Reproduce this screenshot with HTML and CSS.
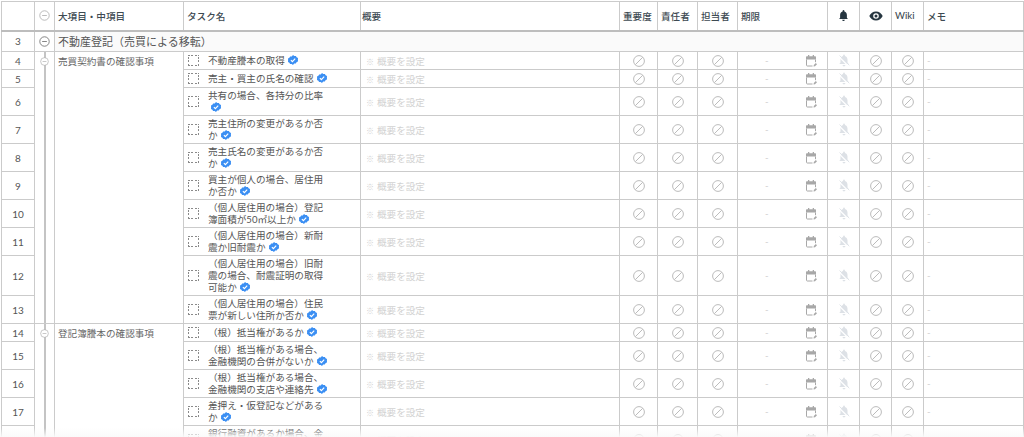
FILE: index.html
```html
<!DOCTYPE html>
<html lang="ja">
<head>
<meta charset="utf-8">
<title>タスク一覧</title>
<link rel="stylesheet" href="styles.css">
</head>
<body>
<svg class="sprite" aria-hidden="true">
  <symbol id="ban" viewBox="0 0 12 12"><circle cx="6" cy="6" r="5.4" fill="none" stroke="currentColor"/><path d="M2.3 9.7 9.700 2.300" stroke="currentColor" fill="none"/></symbol>
  <symbol id="cal" viewBox="0 0 12 12"><path d="M3 0h1.300v1.200h3.400V0H9v1.200h1c.6 0 1 .4 1 1v2.400H1V2.200c0-.6.400-1 1-1h1z" fill="currentColor"/><path d="M1.500 4.500v5.700c0 .4.300.8.800.8h5.200M10.500 4.500v2.700" fill="none" stroke="currentColor"/><path d="M8.500 11.600 8.800 10l2-2 1.200 1.200-2 2z" fill="currentColor"/></symbol>
  <symbol id="belloff" viewBox="0 0 12 13"><path d="M6 .5c.5 0 .9.400.9.900v.5c1.700.4 2.600 1.900 2.600 3.600v3l1.200 1.500H1.300l1.200-1.500v-3c0-1.700.9-3.200 2.600-3.600v-.5c0-.5.400-.9.900-.9zM4.600 11.100h2.800c0 .8-.6 1.400-1.400 1.400s-1.400-.6-1.400-1.400z" fill="currentColor"/><path d="M.9 2.600l9.400 9.400" stroke="#fff" stroke-width="1.300"/><path d="M1.500 1.500l9.800 9.800" stroke="currentColor" stroke-width=".9"/></symbol>
  <symbol id="bell" viewBox="0 0 12 12"><path d="M6 0c.6 0 1 .4 1 1v.6c1.700.5 2.700 2 2.700 3.800v3l1.100 1.300H1.200l1.100-1.300v-3c0-1.800 1-3.300 2.700-3.800V1c0-.6.400-1 1-1zM4.600 10.600h2.800C7.400 11.400 6.800 12 6 12s-1.400-.6-1.400-1.400z" fill="currentColor"/></symbol>
  <symbol id="eye" viewBox="0 0 14 10"><path d="M7 .5C4 .5 1.500 2.300.3 5 1.500 7.700 4 9.500 7 9.500s5.500-1.800 6.700-4.500C12.500 2.300 10 .5 7 .5zm0 7.300A2.800 2.800 0 1 1 7 2.200a2.800 2.800 0 0 1 0 5.600zM7 3.500a1.500 1.500 0 1 0 0 3 1.500 1.500 0 0 0 0-3z" fill="currentColor"/></symbol>
  <symbol id="check" viewBox="0 0 10 10"><path d="M5 .1l1.300.9 1.600-.1.700 1.400 1.400.8-.1 1.600.1.300-.1 1.400-1.400.8-.7 1.400-1.600-.1L5 9.900l-1.300-.9-1.600.1-.7-1.400L0 6.900l.1-1.600L0 3.600l1.400-.8.7-1.400 1.600.1z" fill="#3b8ff3"/><path d="M2.900 5.100l1.500 1.500 2.800-2.900" fill="none" stroke="#fff" stroke-width="1.200"/></symbol>
  <symbol id="minus" viewBox="0 0 14 14"><circle cx="7" cy="7" r="6" fill="#fff" stroke="currentColor" stroke-width="1"/><path d="M4 7h6" stroke="currentColor" stroke-width="1"/></symbol>
</svg>
<main class="sheet">
<table class="grid">
<colgroup>
  <col class="c-num"><col class="c-tog"><col class="c-major"><col class="c-task"><col class="c-sum">
  <col class="c-a"><col class="c-b"><col class="c-b"><col class="c-date"><col class="c-i"><col class="c-i"><col class="c-i"><col class="c-memo">
</colgroup>
<thead>
<tr class="head">
  <th></th><th class="tog-cell"><svg class="ic-head-minus"><use href="#minus"/></svg></th>
  <th>大項目・中項目</th><th>タスク名</th><th class="th-sum">概要</th><th>重要度</th><th>責任者</th><th>担当者</th><th>期限</th>
  <th class="mid"><svg class="ic-bell"><use href="#bell"/></svg></th>
  <th class="mid"><svg class="ic-eye"><use href="#eye"/></svg></th>
  <th>Wiki</th><th>メモ</th>
</tr>
</thead>
<tbody>
<tr class="group">
  <td class="num">3</td><td class="tog-cell"><svg class="ic-group-minus"><use href="#minus"/></svg></td>
  <td colspan="11" class="group-title">不動産登記（売買による移転）</td>
</tr>

<tr class="h18"><td class="num">4</td><td class="tree" rowspan="10"><svg class="ic-node"><use href="#minus"/></svg></td><td class="major" rowspan="10">売買契約書の確認事項</td>
  <td><div class="task"><span class="box"></span><p>不動産謄本の取得<svg class="ic-check"><use href="#check"/></svg></p></div></td>
  <td class="sum"><span class="mark">※</span>概要を設定</td>
  <td class="ico"><svg class="ic-ban"><use href="#ban"/></svg></td><td class="ico"><svg class="ic-ban"><use href="#ban"/></svg></td><td class="ico"><svg class="ic-ban"><use href="#ban"/></svg></td>
  <td><div class="date"><span>-</span><svg class="ic-cal"><use href="#cal"/></svg></div></td>
  <td class="ico"><svg class="ic-off"><use href="#belloff"/></svg></td><td class="ico"><svg class="ic-ban"><use href="#ban"/></svg></td><td class="ico"><svg class="ic-ban"><use href="#ban"/></svg></td><td class="memo">-</td></tr>
<tr class="h18"><td class="num">5</td>
  <td><div class="task"><span class="box"></span><p>売主・買主の氏名の確認<svg class="ic-check"><use href="#check"/></svg></p></div></td>
  <td class="sum"><span class="mark">※</span>概要を設定</td>
  <td class="ico"><svg class="ic-ban"><use href="#ban"/></svg></td><td class="ico"><svg class="ic-ban"><use href="#ban"/></svg></td><td class="ico"><svg class="ic-ban"><use href="#ban"/></svg></td>
  <td><div class="date"><span>-</span><svg class="ic-cal"><use href="#cal"/></svg></div></td>
  <td class="ico"><svg class="ic-off"><use href="#belloff"/></svg></td><td class="ico"><svg class="ic-ban"><use href="#ban"/></svg></td><td class="ico"><svg class="ic-ban"><use href="#ban"/></svg></td><td class="memo">-</td></tr>
<tr class="h28"><td class="num">6</td>
  <td><div class="task"><span class="box"></span><p>共有の場合、各持分の比率<svg class="ic-check"><use href="#check"/></svg></p></div></td>
  <td class="sum"><span class="mark">※</span>概要を設定</td>
  <td class="ico"><svg class="ic-ban"><use href="#ban"/></svg></td><td class="ico"><svg class="ic-ban"><use href="#ban"/></svg></td><td class="ico"><svg class="ic-ban"><use href="#ban"/></svg></td>
  <td><div class="date"><span>-</span><svg class="ic-cal"><use href="#cal"/></svg></div></td>
  <td class="ico"><svg class="ic-off"><use href="#belloff"/></svg></td><td class="ico"><svg class="ic-ban"><use href="#ban"/></svg></td><td class="ico"><svg class="ic-ban"><use href="#ban"/></svg></td><td class="memo">-</td></tr>
<tr class="h28"><td class="num">7</td>
  <td><div class="task"><span class="box"></span><p>売主住所の変更があるか否か<svg class="ic-check"><use href="#check"/></svg></p></div></td>
  <td class="sum"><span class="mark">※</span>概要を設定</td>
  <td class="ico"><svg class="ic-ban"><use href="#ban"/></svg></td><td class="ico"><svg class="ic-ban"><use href="#ban"/></svg></td><td class="ico"><svg class="ic-ban"><use href="#ban"/></svg></td>
  <td><div class="date"><span>-</span><svg class="ic-cal"><use href="#cal"/></svg></div></td>
  <td class="ico"><svg class="ic-off"><use href="#belloff"/></svg></td><td class="ico"><svg class="ic-ban"><use href="#ban"/></svg></td><td class="ico"><svg class="ic-ban"><use href="#ban"/></svg></td><td class="memo">-</td></tr>
<tr class="h28"><td class="num">8</td>
  <td><div class="task"><span class="box"></span><p>売主氏名の変更があるか否か<svg class="ic-check"><use href="#check"/></svg></p></div></td>
  <td class="sum"><span class="mark">※</span>概要を設定</td>
  <td class="ico"><svg class="ic-ban"><use href="#ban"/></svg></td><td class="ico"><svg class="ic-ban"><use href="#ban"/></svg></td><td class="ico"><svg class="ic-ban"><use href="#ban"/></svg></td>
  <td><div class="date"><span>-</span><svg class="ic-cal"><use href="#cal"/></svg></div></td>
  <td class="ico"><svg class="ic-off"><use href="#belloff"/></svg></td><td class="ico"><svg class="ic-ban"><use href="#ban"/></svg></td><td class="ico"><svg class="ic-ban"><use href="#ban"/></svg></td><td class="memo">-</td></tr>
<tr class="h28"><td class="num">9</td>
  <td><div class="task"><span class="box"></span><p>買主が個人の場合、居住用か否か<svg class="ic-check"><use href="#check"/></svg></p></div></td>
  <td class="sum"><span class="mark">※</span>概要を設定</td>
  <td class="ico"><svg class="ic-ban"><use href="#ban"/></svg></td><td class="ico"><svg class="ic-ban"><use href="#ban"/></svg></td><td class="ico"><svg class="ic-ban"><use href="#ban"/></svg></td>
  <td><div class="date"><span>-</span><svg class="ic-cal"><use href="#cal"/></svg></div></td>
  <td class="ico"><svg class="ic-off"><use href="#belloff"/></svg></td><td class="ico"><svg class="ic-ban"><use href="#ban"/></svg></td><td class="ico"><svg class="ic-ban"><use href="#ban"/></svg></td><td class="memo">-</td></tr>
<tr class="h28"><td class="num">10</td>
  <td><div class="task"><span class="box"></span><p>（個人居住用の場合）登記簿面積が50㎡以上か<svg class="ic-check"><use href="#check"/></svg></p></div></td>
  <td class="sum"><span class="mark">※</span>概要を設定</td>
  <td class="ico"><svg class="ic-ban"><use href="#ban"/></svg></td><td class="ico"><svg class="ic-ban"><use href="#ban"/></svg></td><td class="ico"><svg class="ic-ban"><use href="#ban"/></svg></td>
  <td><div class="date"><span>-</span><svg class="ic-cal"><use href="#cal"/></svg></div></td>
  <td class="ico"><svg class="ic-off"><use href="#belloff"/></svg></td><td class="ico"><svg class="ic-ban"><use href="#ban"/></svg></td><td class="ico"><svg class="ic-ban"><use href="#ban"/></svg></td><td class="memo">-</td></tr>
<tr class="h28"><td class="num">11</td>
  <td><div class="task"><span class="box"></span><p>（個人居住用の場合）新耐震か旧耐震か<svg class="ic-check"><use href="#check"/></svg></p></div></td>
  <td class="sum"><span class="mark">※</span>概要を設定</td>
  <td class="ico"><svg class="ic-ban"><use href="#ban"/></svg></td><td class="ico"><svg class="ic-ban"><use href="#ban"/></svg></td><td class="ico"><svg class="ic-ban"><use href="#ban"/></svg></td>
  <td><div class="date"><span>-</span><svg class="ic-cal"><use href="#cal"/></svg></div></td>
  <td class="ico"><svg class="ic-off"><use href="#belloff"/></svg></td><td class="ico"><svg class="ic-ban"><use href="#ban"/></svg></td><td class="ico"><svg class="ic-ban"><use href="#ban"/></svg></td><td class="memo">-</td></tr>
<tr class="h40"><td class="num">12</td>
  <td><div class="task"><span class="box"></span><p>（個人居住用の場合）旧耐震の場合、耐震証明の取得可能か<svg class="ic-check"><use href="#check"/></svg></p></div></td>
  <td class="sum"><span class="mark">※</span>概要を設定</td>
  <td class="ico"><svg class="ic-ban"><use href="#ban"/></svg></td><td class="ico"><svg class="ic-ban"><use href="#ban"/></svg></td><td class="ico"><svg class="ic-ban"><use href="#ban"/></svg></td>
  <td><div class="date"><span>-</span><svg class="ic-cal"><use href="#cal"/></svg></div></td>
  <td class="ico"><svg class="ic-off"><use href="#belloff"/></svg></td><td class="ico"><svg class="ic-ban"><use href="#ban"/></svg></td><td class="ico"><svg class="ic-ban"><use href="#ban"/></svg></td><td class="memo">-</td></tr>
<tr class="h28"><td class="num">13</td>
  <td><div class="task"><span class="box"></span><p>（個人居住用の場合）住民票が新しい住所か否か<svg class="ic-check"><use href="#check"/></svg></p></div></td>
  <td class="sum"><span class="mark">※</span>概要を設定</td>
  <td class="ico"><svg class="ic-ban"><use href="#ban"/></svg></td><td class="ico"><svg class="ic-ban"><use href="#ban"/></svg></td><td class="ico"><svg class="ic-ban"><use href="#ban"/></svg></td>
  <td><div class="date"><span>-</span><svg class="ic-cal"><use href="#cal"/></svg></div></td>
  <td class="ico"><svg class="ic-off"><use href="#belloff"/></svg></td><td class="ico"><svg class="ic-ban"><use href="#ban"/></svg></td><td class="ico"><svg class="ic-ban"><use href="#ban"/></svg></td><td class="memo">-</td></tr>

<tr class="h18"><td class="num">14</td><td class="tree" rowspan="5"><svg class="ic-node"><use href="#minus"/></svg></td><td class="major" rowspan="5">登記簿謄本の確認事項</td>
  <td><div class="task"><span class="box"></span><p>（根）抵当権があるか<svg class="ic-check"><use href="#check"/></svg></p></div></td>
  <td class="sum"><span class="mark">※</span>概要を設定</td>
  <td class="ico"><svg class="ic-ban"><use href="#ban"/></svg></td><td class="ico"><svg class="ic-ban"><use href="#ban"/></svg></td><td class="ico"><svg class="ic-ban"><use href="#ban"/></svg></td>
  <td><div class="date"><span>-</span><svg class="ic-cal"><use href="#cal"/></svg></div></td>
  <td class="ico"><svg class="ic-off"><use href="#belloff"/></svg></td><td class="ico"><svg class="ic-ban"><use href="#ban"/></svg></td><td class="ico"><svg class="ic-ban"><use href="#ban"/></svg></td><td class="memo">-</td></tr>
<tr class="h28"><td class="num">15</td>
  <td><div class="task"><span class="box"></span><p>（根）抵当権がある場合、金融機関の合併がないか<svg class="ic-check"><use href="#check"/></svg></p></div></td>
  <td class="sum"><span class="mark">※</span>概要を設定</td>
  <td class="ico"><svg class="ic-ban"><use href="#ban"/></svg></td><td class="ico"><svg class="ic-ban"><use href="#ban"/></svg></td><td class="ico"><svg class="ic-ban"><use href="#ban"/></svg></td>
  <td><div class="date"><span>-</span><svg class="ic-cal"><use href="#cal"/></svg></div></td>
  <td class="ico"><svg class="ic-off"><use href="#belloff"/></svg></td><td class="ico"><svg class="ic-ban"><use href="#ban"/></svg></td><td class="ico"><svg class="ic-ban"><use href="#ban"/></svg></td><td class="memo">-</td></tr>
<tr class="h28"><td class="num">16</td>
  <td><div class="task"><span class="box"></span><p>（根）抵当権がある場合、金融機関の支店や連絡先<svg class="ic-check"><use href="#check"/></svg></p></div></td>
  <td class="sum"><span class="mark">※</span>概要を設定</td>
  <td class="ico"><svg class="ic-ban"><use href="#ban"/></svg></td><td class="ico"><svg class="ic-ban"><use href="#ban"/></svg></td><td class="ico"><svg class="ic-ban"><use href="#ban"/></svg></td>
  <td><div class="date"><span>-</span><svg class="ic-cal"><use href="#cal"/></svg></div></td>
  <td class="ico"><svg class="ic-off"><use href="#belloff"/></svg></td><td class="ico"><svg class="ic-ban"><use href="#ban"/></svg></td><td class="ico"><svg class="ic-ban"><use href="#ban"/></svg></td><td class="memo">-</td></tr>
<tr class="h28"><td class="num">17</td>
  <td><div class="task"><span class="box"></span><p>差押え・仮登記などがあるか<svg class="ic-check"><use href="#check"/></svg></p></div></td>
  <td class="sum"><span class="mark">※</span>概要を設定</td>
  <td class="ico"><svg class="ic-ban"><use href="#ban"/></svg></td><td class="ico"><svg class="ic-ban"><use href="#ban"/></svg></td><td class="ico"><svg class="ic-ban"><use href="#ban"/></svg></td>
  <td><div class="date"><span>-</span><svg class="ic-cal"><use href="#cal"/></svg></div></td>
  <td class="ico"><svg class="ic-off"><use href="#belloff"/></svg></td><td class="ico"><svg class="ic-ban"><use href="#ban"/></svg></td><td class="ico"><svg class="ic-ban"><use href="#ban"/></svg></td><td class="memo">-</td></tr>
<tr class="h28"><td class="num">18</td>
  <td><div class="task"><span class="box"></span><p>銀行融資があるか場合、金融機関の確認<svg class="ic-check"><use href="#check"/></svg></p></div></td>
  <td class="sum"><span class="mark">※</span>概要を設定</td>
  <td class="ico"><svg class="ic-ban"><use href="#ban"/></svg></td><td class="ico"><svg class="ic-ban"><use href="#ban"/></svg></td><td class="ico"><svg class="ic-ban"><use href="#ban"/></svg></td>
  <td><div class="date"><span>-</span><svg class="ic-cal"><use href="#cal"/></svg></div></td>
  <td class="ico"><svg class="ic-off"><use href="#belloff"/></svg></td><td class="ico"><svg class="ic-ban"><use href="#ban"/></svg></td><td class="ico"><svg class="ic-ban"><use href="#ban"/></svg></td><td class="memo">-</td></tr>
</tbody>
</table>
</main>
</body>
</html>
```
FILE: styles.css
```css
* { box-sizing: border-box; }
html, body { margin: 0; height: 437px; overflow: hidden; background: #fff; }
body { font-family: "Lato", "Noto Sans CJK JP", sans-serif; color: #5a6168; }
.sprite { width: 0; height: 0; position: absolute; }
.sheet { padding: 1px 0 0 1px; position: relative; height: 437px; overflow: hidden; }
.sheet::after { content: ""; position: absolute; left: 0; right: 0; bottom: 0; height: 9px; background: linear-gradient(rgba(255,255,255,0), rgba(250,250,250,.95)); }
.grid { border-collapse: collapse; table-layout: fixed; width: 1023px; font-size: 9.6px; }
.grid th, .grid td { border: 1px solid #cbcbcb; padding: 0; overflow: hidden; }
.c-num { width: 33px; } .c-tog { width: 20px; } .c-major { width: 129px; } .c-task { width: 177px; } .c-sum { width: 259px; }
.c-a { width: 38px; } .c-b { width: 40px; } .c-date { width: 90px; } .c-i { width: 32px; } .c-memo { width: 100px; }

.head { height: 29px; }
.head th { text-align: left; font-weight: 500; color: #3d4a52; padding-left: 3px; border-bottom: 2px solid #bdbdbd; }
.head th.tog-cell, .head th.mid { padding-left: 0; text-align: center; }
.head th.th-sum { padding-left: 1px; }
.ic-head-minus { width: 11px; height: 11px; color: #aaa; display: block; margin: 0 auto; }
.ic-bell { width: 11px; height: 13px; color: #263640; display: block; margin: 0 auto; }
.ic-eye { width: 14px; height: 10px; color: #263640; display: block; margin: 0 auto; }

.group { height: 21px; }
.group .num, .group .tog-cell { background: #fff; }
.grid .group-title { font-size: 11px; padding-left: 3px; background: #fafafa; color: #555; }
.ic-group-minus { width: 11px; height: 11px; color: #666; display: block; margin: 0 auto; }

.h18 { height: 18px; } .h28 { height: 28px; } .h40 { height: 40px; }
.num { text-align: center; font-size: 10px; color: #555; }
.grid .tree { vertical-align: top; background: linear-gradient(#c4c4c4, #c4c4c4) center / 2px 100% no-repeat; padding-top: 5px; }
.ic-node { width: 9px; height: 9px; color: #aaa; display: block; margin: 0 auto; }
.grid .major { vertical-align: top; padding: 4px 0 0 3px; line-height: 12px; color: #666; }

.task { display: flex; align-items: center; padding-left: 4px; }
.box {
  width: 11px; height: 11px; flex: none;
  background:
    repeating-linear-gradient(90deg, #8a8a8a 0 2px, transparent 2px 3.5px) top / 100% 1px no-repeat,
    repeating-linear-gradient(90deg, #8a8a8a 0 2px, transparent 2px 3.5px) bottom / 100% 1px no-repeat,
    repeating-linear-gradient(0deg, #8a8a8a 0 2px, transparent 2px 3.5px) left / 1px 100% no-repeat,
    repeating-linear-gradient(0deg, #8a8a8a 0 2px, transparent 2px 3.5px) right / 1px 100% no-repeat;
}
.task p { margin: 0 0 0 9px; padding-top: 1px; width: 122px; line-height: 12px; color: #555; }
.ic-check { width: 10px; height: 10px; margin-left: 3px; vertical-align: -1px; }

.grid .sum { color: #d2d2d2; padding-left: 5px; }
.mark { font-size: 8px; margin-right: 3px; }

.ico { text-align: center; }
.ic-ban { width: 12px; height: 12px; color: #bcbcbc; display: block; margin: 0 auto; }
.ic-off { width: 12px; height: 13px; color: #dde1e6; display: block; margin: 0 auto; }

.date { display: flex; align-items: center; justify-content: space-between; padding: 0 10px 0 27px; color: #d0d0d0; }
.ic-cal { width: 12px; height: 12px; color: #a8a8a8; display: block; }
.grid .memo { color: #d0d0d0; padding-left: 3px; }
```
